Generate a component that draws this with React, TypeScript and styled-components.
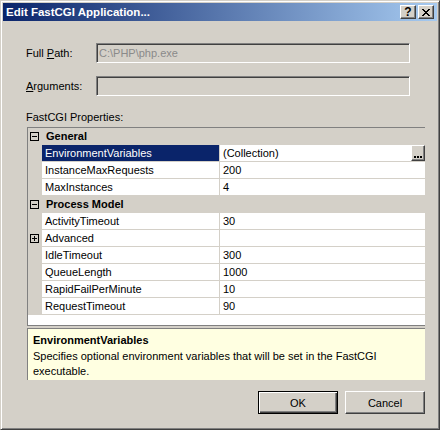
import React from 'react';
import styled, { createGlobalStyle } from 'styled-components';

const FACE = '#d4d0c8';
const SHADOW = '#808080';
const DARK = '#404040';
const NAVY = '#0a246a';

const GlobalStyle = createGlobalStyle`
  html, body {
    margin: 0;
    padding: 0;
    background: ${FACE};
  }
  body {
    font-family: 'Liberation Sans', Arial, sans-serif;
    font-size: 11px;
    color: #000;
  }
`;

const Window = styled.div`
  box-sizing: border-box;
  width: 440px;
  height: 430px;
  padding: 2px;
  background: ${FACE};
  border: 1px solid;
  border-color: ${FACE} ${DARK} ${DARK} ${FACE};
  box-shadow: inset 1px 1px #fff, inset -1px -1px ${SHADOW};
  display: flex;
  flex-direction: column;
`;

const TitleBar = styled.div`
  height: 18px;
  display: flex;
  align-items: center;
  padding: 0 3px;
  background: linear-gradient(to right, ${NAVY}, #a6caf0);
`;

const Title = styled.span`
  flex: 1;
  color: #fff;
  font-weight: bold;
  font-size: 11.5px;
  line-height: 18px;
`;

const CaptionButtons = styled.div`
  display: flex;
  gap: 2px;
`;

const CaptionButton = styled.div`
  box-sizing: border-box;
  width: 16px;
  height: 14px;
  background: ${FACE};
  border: 1px solid;
  border-color: #fff ${DARK} ${DARK} #fff;
  box-shadow: inset -1px -1px ${SHADOW};
  display: flex;
  align-items: center;
  justify-content: center;
  font-weight: bold;
  font-size: 12px;
  line-height: 11px;
`;

const Body = styled.div`
  flex: 1;
  display: flex;
  flex-direction: column;
  padding: 22px 12px 0 23px;
`;

const FieldRow = styled.div`
  display: flex;
  align-items: center;
  height: 20px;
  & + & {
    margin-top: 13px;
  }
`;

const FieldLabel = styled.label`
  width: 70px;
  flex-shrink: 0;
`;

const TextBox = styled.div`
  box-sizing: border-box;
  width: 314px;
  height: 20px;
  padding-left: 2px;
  display: flex;
  align-items: center;
  background: ${FACE};
  color: #8a8a8a;
  border: 1px solid;
  border-color: ${SHADOW} #fff #fff ${SHADOW};
  box-shadow: inset 1px 1px ${DARK}, inset -1px -1px ${FACE};
`;

const SectionLabel = styled.div`
  margin: 15px 0 3px;
  line-height: 13px;
`;

const Grid = styled.div`
  box-sizing: border-box;
  margin-left: 1px;
  height: 199px;
  background: #fff;
  border: 1px solid ${SHADOW};
  border-right: none;
  display: flex;
  flex-direction: column;
`;

const Row = styled.div<{ $category?: boolean }>`
  box-sizing: border-box;
  height: 17px;
  display: grid;
  grid-template-columns: ${(p) => (p.$category ? '14px 1fr' : '14px 178px 1fr')};
  border-bottom: 1px solid ${FACE};
  background: ${(p) => (p.$category ? FACE : '#fff')};
  font-weight: ${(p) => (p.$category ? 'bold' : 'normal')};
  line-height: 16px;
`;

const Margin = styled.div`
  background: ${FACE};
  display: flex;
  align-items: center;
  padding-left: 2px;
`;

const ExpandBox = styled.div<{ $open: boolean }>`
  position: relative;
  box-sizing: border-box;
  width: 9px;
  height: 9px;
  border: 1px solid #000;
  &::before {
    content: '';
    position: absolute;
    left: 1px;
    top: 3px;
    width: 5px;
    height: 1px;
    background: #000;
  }
  &::after {
    content: '';
    display: ${(p) => (p.$open ? 'none' : 'block')};
    position: absolute;
    left: 3px;
    top: 1px;
    width: 1px;
    height: 5px;
    background: #000;
  }
`;

const CategoryName = styled.div`
  padding-left: 4px;
`;

const NameCell = styled.div<{ $selected?: boolean }>`
  padding-left: 3px;
  border-right: 1px solid ${FACE};
  background: ${(p) => (p.$selected ? NAVY : '#fff')};
  color: ${(p) => (p.$selected ? '#fff' : '#000')};
  white-space: nowrap;
  overflow: hidden;
`;

const ValueCell = styled.div`
  display: flex;
  align-items: stretch;
  justify-content: space-between;
  padding-left: 3px;
`;

const EllipsisButton = styled.div`
  box-sizing: border-box;
  width: 14px;
  background: ${FACE};
  border: 1px solid;
  border-color: #fff ${DARK} ${DARK} #fff;
  box-shadow: inset -1px -1px ${SHADOW};
  display: flex;
  align-items: flex-end;
  justify-content: center;
  padding-bottom: 2px;
`;

const Description = styled.div`
  box-sizing: border-box;
  margin: 2px 0 0 1px;
  height: 52px;
  padding: 5px 5px 0;
  background: #ffffe1;
  border-top: 1px solid ${SHADOW};
  border-left: 1px solid ${SHADOW};
`;

const DescTitle = styled.div`
  font-weight: bold;
  line-height: 13px;
`;

const DescText = styled.div`
  margin-top: 2px;
  line-height: 15px;
`;

const Footer = styled.div`
  margin-top: 11px;
  display: flex;
  justify-content: flex-end;
  gap: 7px;
`;

const DialogButton = styled.button<{ $default?: boolean }>`
  box-sizing: border-box;
  width: 80px;
  height: 23px;
  padding: 0;
  font: inherit;
  color: #000;
  background: ${FACE};
  border: 1px solid;
  border-color: ${(p) => (p.$default ? '#000' : `#fff ${DARK} ${DARK} #fff`)};
  box-shadow: ${(p) =>
    p.$default
      ? `inset 1px 1px #fff, inset -1px -1px ${DARK}, inset -2px -2px ${SHADOW}`
      : `inset -1px -1px ${SHADOW}`};
`;

type Prop = { name: string; value: string; expandable?: boolean; selected?: boolean; button?: boolean };
type Category = { name: string; props: Prop[] };

const categories: Category[] = [
  {
    name: 'General',
    props: [
      { name: 'EnvironmentVariables', value: '(Collection)', selected: true, button: true },
      { name: 'InstanceMaxRequests', value: '200' },
      { name: 'MaxInstances', value: '4' },
    ],
  },
  {
    name: 'Process Model',
    props: [
      { name: 'ActivityTimeout', value: '30' },
      { name: 'Advanced', value: '', expandable: true },
      { name: 'IdleTimeout', value: '300' },
      { name: 'QueueLength', value: '1000' },
      { name: 'RapidFailPerMinute', value: '10' },
      { name: 'RequestTimeout', value: '90' },
    ],
  },
];

const CloseGlyph = () => (
  <svg width="8" height="7" viewBox="0 0 8 7" shapeRendering="crispEdges">
    <path
      fill="#000"
      d="M0 0h2v1H0zM6 0h2v1H6zM1 1h2v1H1zM5 1h2v1H5zM2 2h4v1H2zM3 3h2v1H3zM2 4h4v1H2zM1 5h2v1H1zM5 5h2v1H5zM0 6h2v1H0zM6 6h2v1H6z"
    />
  </svg>
);

const Dots = () => (
  <svg width="8" height="2" viewBox="0 0 8 2" shapeRendering="crispEdges">
    <path fill="#000" d="M0 0h2v2H0zM3 0h2v2H3zM6 0h2v2H6z" />
  </svg>
);

export default function App() {
  return (
    <>
      <GlobalStyle />
      <Window>
        <TitleBar>
          <Title>Edit FastCGI Application...</Title>
          <CaptionButtons>
            <CaptionButton>?</CaptionButton>
            <CaptionButton>
              <CloseGlyph />
            </CaptionButton>
          </CaptionButtons>
        </TitleBar>
        <Body>
          <FieldRow>
            <FieldLabel>
              Full <u>P</u>ath:
            </FieldLabel>
            <TextBox>C:\PHP\php.exe</TextBox>
          </FieldRow>
          <FieldRow>
            <FieldLabel>
              <u>A</u>rguments:
            </FieldLabel>
            <TextBox />
          </FieldRow>
          <SectionLabel>FastCGI Properties:</SectionLabel>
          <Grid>
            {categories.map((cat) => (
              <React.Fragment key={cat.name}>
                <Row $category>
                  <Margin>
                    <ExpandBox $open />
                  </Margin>
                  <CategoryName>{cat.name}</CategoryName>
                </Row>
                {cat.props.map((p) => (
                  <Row key={p.name}>
                    <Margin>{p.expandable && <ExpandBox $open={false} />}</Margin>
                    <NameCell $selected={p.selected}>{p.name}</NameCell>
                    <ValueCell>
                      <span>{p.value}</span>
                      {p.button && (
                        <EllipsisButton>
                          <Dots />
                        </EllipsisButton>
                      )}
                    </ValueCell>
                  </Row>
                ))}
              </React.Fragment>
            ))}
          </Grid>
          <Description>
            <DescTitle>EnvironmentVariables</DescTitle>
            <DescText>
              Specifies optional environment variables that will be set in the FastCGI executable.
            </DescText>
          </Description>
          <Footer>
            <DialogButton $default>OK</DialogButton>
            <DialogButton>Cancel</DialogButton>
          </Footer>
        </Body>
      </Window>
    </>
  );
}
